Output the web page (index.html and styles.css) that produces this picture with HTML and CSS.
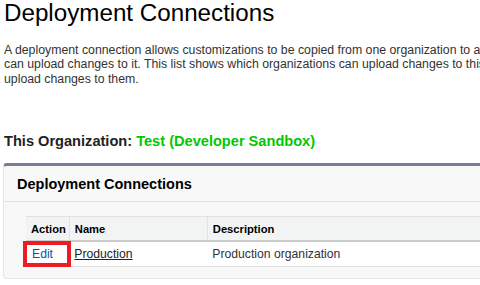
FILE: index.html
```html
<!DOCTYPE html>
<html>
<head>
<meta charset="utf-8">
<link rel="stylesheet" href="styles.css">
</head>
<body>
<div class="page">
  <h1 class="title">Deployment Connections</h1>
  <p class="intro">
    <span class="line">A deployment connection allows customizations to be copied from one organization to another. Your organization must be authorized before an organization</span>
    <span class="line">can upload changes to it. This list shows which organizations can upload changes to this organization, and which organizations this organization can</span>
    <span class="line">upload changes to them.</span>
  </p>
  <div class="org">This Organization: <span class="org-name">Test (Developer Sandbox)</span></div>
  <div class="panel">
    <div class="panel-header"><h2 class="panel-title">Deployment Connections</h2></div>
    <div class="panel-body">
      <table class="list">
        <thead>
          <tr>
            <th class="col-action">Action</th>
            <th class="col-name">Name</th>
            <th class="col-desc">Description</th>
          </tr>
        </thead>
        <tbody>
          <tr>
            <td class="cell-action"><a class="edit-link" href="#">Edit</a><span class="highlight"></span></td>
            <td><a class="name-link" href="#">Production</a></td>
            <td>Production organization</td>
          </tr>
        </tbody>
      </table>
    </div>
  </div>
</div>
</body>
</html>
```
FILE: styles.css
```css
html, body {
  margin: 0;
  padding: 0;
  background: #fff;
  overflow: hidden;
}
body {
  font-family: "Liberation Sans", Arial, sans-serif;
  color: #000;
  width: 480px;
  height: 285px;
}
.page {
  width: 900px;
  padding-left: 4px;
}
.title {
  margin: 0;
  font-size: 24.2px;
  font-weight: normal;
  line-height: 26px;
  color: #000;
}
.intro {
  margin: 17px 0 0;
  font-size: 12.3px;
  line-height: 14.4px;
  color: #333;
}
.line {
  display: block;
  white-space: nowrap;
}
.org {
  margin-top: 47px;
  font-size: 14.6px;
  line-height: 16px;
  font-weight: bold;
  color: #222;
}
.org-name {
  color: #00c800;
}
.panel {
  margin: 14px 0 0 -1px;
  width: 800px;
  background: #f8f8f8;
  border: 1px solid #e6e6e6;
  border-top: 3px solid #747e96;
  border-radius: 4px;
  padding-bottom: 11px;
}
.panel-header {
  padding: 10px 0 9px 13px;
  border-bottom: 1px solid #e0e3e5;
}
.panel-title {
  margin: 0;
  font-size: 14.5px;
  line-height: 16px;
  font-weight: bold;
  color: #000;
}
.panel-body {
  padding: 14px 0 0 22px;
}
.list {
  border-collapse: collapse;
  width: 760px;
  font-size: 12.2px;
}
.list th {
  background: #f2f3f3;
  border-top: 1px solid #e0e3e5;
  border-bottom: 2px solid #cccccc;
  border-left: 1px solid #e0e3e5;
  font-size: 11.2px;
  font-weight: bold;
  color: #000;
  text-align: left;
  height: 23px;
  padding: 0 5px;
  vertical-align: middle;
}
.list th:first-child {
  border-left: none;
}
.list th.col-action,
.list td.cell-action {
  padding-right: 3px;
}
.col-action { width: 30px; }
.col-name { width: 127px; }
.list td {
  background: #fff;
  border-bottom: 1px solid #e3e3e3;
  height: 24px;
  padding: 0 5px;
  color: #333;
  vertical-align: middle;
}
.cell-action {
  position: relative;
}
.edit-link {
  color: #015ba7;
  text-decoration: none;
  padding-left: 1px;
}
.name-link {
  color: #222;
  text-decoration: underline;
}
.highlight {
  position: absolute;
  left: -3px;
  top: -1px;
  width: 48px;
  height: 26px;
  box-sizing: border-box;
  border: 4px solid #ed1c24;
}
```
